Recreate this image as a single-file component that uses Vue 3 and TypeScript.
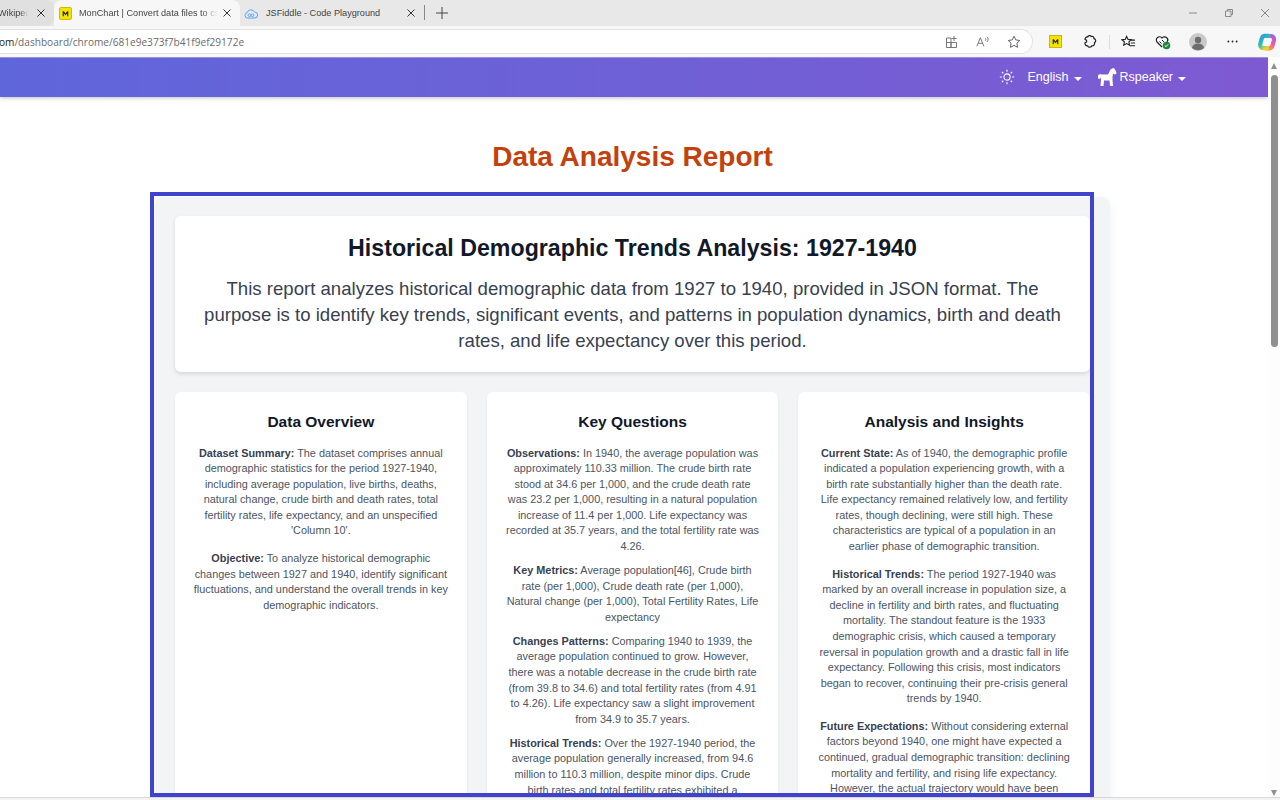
<script setup lang="ts">
interface Para { label: string; text: string }
interface Column { title: string; tight: boolean; paras: Para[] }
const columns: Column[] = [
  { title: 'Data Overview', tight: false, paras: [
    { label: 'Dataset Summary:', text: "The dataset comprises annual demographic statistics for the period 1927-1940, including average population, live births, deaths, natural change, crude birth and death rates, total fertility rates, life expectancy, and an unspecified 'Column 10'." },
    { label: 'Objective:', text: 'To analyze historical demographic changes between 1927 and 1940, identify significant fluctuations, and understand the overall trends in key demographic indicators.' },
  ]},
  { title: 'Key Questions', tight: true, paras: [
    { label: 'Observations:', text: 'In 1940, the average population was approximately 110.33 million. The crude birth rate stood at 34.6 per 1,000, and the crude death rate was 23.2 per 1,000, resulting in a natural population increase of 11.4 per 1,000. Life expectancy was recorded at 35.7 years, and the total fertility rate was 4.26.' },
    { label: 'Key Metrics:', text: 'Average population[46], Crude birth rate (per 1,000), Crude death rate (per 1,000), Natural change (per 1,000), Total Fertility Rates, Life expectancy' },
    { label: 'Changes Patterns:', text: 'Comparing 1940 to 1939, the average population continued to grow. However, there was a notable decrease in the crude birth rate (from 39.8 to 34.6) and total fertility rates (from 4.91 to 4.26). Life expectancy saw a slight improvement from 34.9 to 35.7 years.' },
    { label: 'Historical Trends:', text: 'Over the 1927-1940 period, the average population generally increased, from 94.6 million to 110.3 million, despite minor dips. Crude birth rates and total fertility rates exhibited a downward trend over the period.' },
  ]},
  { title: 'Analysis and Insights', tight: false, paras: [
    { label: 'Current State:', text: 'As of 1940, the demographic profile indicated a population experiencing growth, with a birth rate substantially higher than the death rate. Life expectancy remained relatively low, and fertility rates, though declining, were still high. These characteristics are typical of a population in an earlier phase of demographic transition.' },
    { label: 'Historical Trends:', text: 'The period 1927-1940 was marked by an overall increase in population size, a decline in fertility and birth rates, and fluctuating mortality. The standout feature is the 1933 demographic crisis, which caused a temporary reversal in population growth and a drastic fall in life expectancy. Following this crisis, most indicators began to recover, continuing their pre-crisis general trends by 1940.' },
    { label: 'Future Expectations:', text: 'Without considering external factors beyond 1940, one might have expected a continued, gradual demographic transition: declining mortality and fertility, and rising life expectancy. However, the actual trajectory would have been shaped by later events.' },
  ]},
]
</script>

<template>
  <div class="window">
    <div class="tabstrip">
      <div class="tab side-left">
        <span class="tab-title fade-short">Wikipedia</span>
        <svg class="tab-x" viewBox="0 0 8 8"><path d="M.5.5l7 7M7.500.5l-7 7" stroke="#333"/></svg>
      </div>
      <div class="tab active">
        <svg class="fav" viewBox="0 0 14 14"><rect x="0.5" y="0.5" width="13" height="13" rx="1.5" fill="#f5e300" stroke="#c9b400"/><path d="M4 10V4.5h1.2L7 7l1.800-2.500H10V10H8.800V6.800L7 9 5.200 6.800V10Z" fill="#222"/></svg>
        <span class="tab-title fade">MonChart | Convert data files to csv</span>
        <svg class="tab-x" viewBox="0 0 8 8"><path d="M.5.5l7 7M7.500.5l-7 7" stroke="#333"/></svg>
      </div>
      <div class="tab plain">
        <svg class="fav" viewBox="0 0 16 14"><path d="M4 12.2a3 3 0 0 1-.6-5.9A4.6 4.6 0 0 1 12 5.4a3.4 3.4 0 0 1 .4 6.8Z" fill="#dbeafe" stroke="#5a9fe0" stroke-width="1.1"/><circle cx="6.2" cy="9" r="1.5" fill="none" stroke="#5a9fe0"/><circle cx="9.6" cy="9" r="1.5" fill="none" stroke="#5a9fe0"/></svg>
        <span class="tab-title">JSFiddle - Code Playground</span>
        <svg class="tab-x" viewBox="0 0 8 8"><path d="M.5.5l7 7M7.500.5l-7 7" stroke="#333"/></svg>
      </div>
      <span class="tab-sep"></span>
      <svg class="plus" viewBox="0 0 12 12"><path d="M6 0v12M0 6h12" stroke="#444" stroke-width="1"/></svg>
      <div class="win-controls">
        <svg viewBox="0 0 10 10"><path d="M1 5h8" stroke="#8a8a8a"/></svg>
        <svg viewBox="0 0 10 10"><path d="M1.5 3h5.5v5.5H1.5ZM3.5 3V1.5h5v5H7" fill="none" stroke="#8a8a8a"/></svg>
        <svg viewBox="0 0 10 10"><path d="M1 1l8 8M9 1l-8 8" stroke="#8a8a8a"/></svg>
      </div>
    </div>
    <div class="toolbar">
      <div class="address">
        <span class="url"><span class="url-dark">om</span>/dashboard/chrome/681e9e373f7b41f9ef29172e</span>
        <svg class="addr-ic" viewBox="0 0 14 14"><path d="M1.5 3h4.5v4.5H1.5ZM1.5 7.5h4.5V12.5H1.5ZM6 7.5h5.5V12.5H6ZM9 1v5M6.5 3.500h5" fill="none" stroke="#777"/></svg>
        <svg class="addr-ic" viewBox="0 0 16 14"><path d="M1 12L5 2l4 10M2.500 8.500h5M10.500 2.500c1 .8 1 2 0 3M12.500 1c1.800 1.500 1.800 4.500 0 6" fill="none" stroke="#666"/></svg>
        <svg class="addr-ic" viewBox="0 0 14 14"><path d="M7 1.200l1.800 3.700 4 .6-2.900 2.800.7 4L7 10.400l-3.600 1.900.7-4L1.200 5.500l4-.6Z" fill="none" stroke="#666"/></svg>
      </div>
      <svg class="tool-ic ext-m" viewBox="0 0 14 14"><rect x="0.500" y="0.500" width="13" height="13" fill="#f5e300" stroke="#c9b400"/><path d="M4 10V4.500h1.200L7 7l1.800-2.500H10V10H8.800V6.800L7 9 5.200 6.800V10Z" fill="#222"/></svg>
      <svg class="tool-ic ext-puzzle" viewBox="0 0 16 16"><path d="M5 3.200a2.100 2.100 0 0 1 3.800-.6c1.600-.6 3.100.6 2.900 2.300a2.300 2.300 0 0 1 .6 4.300c.5 2-1 3.800-3.100 3.500a2.300 2.300 0 0 1-4.200 0C3 12.800 1.600 11 2.200 9.400a2.200 2.200 0 0 0 1.800-1.800 2.200 2.200 0 0 0-1.800-1.800C1.800 4.400 3.300 2.800 5 3.200Z" fill="none" stroke="#222" stroke-width="1.300"/></svg>
      <span class="tool-sep"></span>
      <svg class="tool-ic ext-fav" viewBox="0 0 16 14"><path d="M6 1l1.500 3.200 3.500.4-2.600 2.300.7 3.500L6 8.700l-3.100 1.700.7-3.500L1 4.600l3.500-.4Z" fill="none" stroke="#222" stroke-width="1.200"/><path d="M10.500 5H15M10.500 8H15M9.500 11H15" stroke="#222" stroke-width="1.100"/></svg>
      <svg class="tool-ic ext-heart" viewBox="0 0 16 16"><path d="M7 13L2 8a3 3 0 0 1 5-4 3 3 0 0 1 5 4" fill="none" stroke="#222" stroke-width="1.200"/><path d="M4.500 7.500l2 2M7 6l2 2" stroke="#222"/><circle cx="11.500" cy="11.500" r="3.800" fill="#1f8a3b"/><path d="M9.800 11.500l1.200 1.200 2.200-2.400" fill="none" stroke="#fff"/></svg>
      <svg class="avatar" viewBox="0 0 18 18"><circle cx="9" cy="9" r="9" fill="#c9c9c9"/><circle cx="9" cy="7" r="3.200" fill="#6e6e6e"/><path d="M3 15a6 4.500 0 0 1 12 0 9 9 0 0 1-12 0Z" fill="#6e6e6e"/></svg>
      <svg class="dots" viewBox="0 0 12 3"><circle cx="1.500" cy="1.500" r="1" fill="#222"/><circle cx="6" cy="1.500" r="1" fill="#222"/><circle cx="10.500" cy="1.500" r="1" fill="#222"/></svg>
      <svg class="copilot" viewBox="0 0 18 18"><defs><linearGradient id="cpa" x1="0" y1="0" x2="0.600" y2="1"><stop offset="0" stop-color="#1e9bf0"/><stop offset="0.600" stop-color="#35c6a0"/><stop offset="1" stop-color="#e8d13a"/></linearGradient><linearGradient id="cpb" x1="0.800" y1="0" x2="0.300" y2="1"><stop offset="0" stop-color="#a95ce8"/><stop offset="0.500" stop-color="#ee5a9a"/><stop offset="1" stop-color="#f79a3e"/></linearGradient></defs><path d="M8 15.300H11.300C13 15.300 13.800 14.500 14.300 13L15.800 7.700C16.400 5.200 15.200 3 13 3H10" fill="none" stroke="url(#cpb)" stroke-width="4.200" stroke-linecap="round"/><path d="M10.500 2.800H7C5.400 2.800 4.500 3.500 4 5L2.400 10.500C1.800 12.800 3 15.200 5.200 15.200H9" fill="none" stroke="url(#cpa)" stroke-width="4.200" stroke-linecap="round"/></svg>
    </div>
    <div class="viewport">
      <div class="page">
        <nav class="navbar">
          <svg class="sun" viewBox="0 0 16 16"><circle cx="8" cy="8" r="3.100" fill="none" stroke="#fff" stroke-width="1.100"/><path d="M8 .8v2M8 13.200v2M.8 8h2M13.200 8h2M2.900 2.900l1.400 1.400M11.700 11.700l1.400 1.400M2.900 13.100l1.400-1.400M11.700 4.300l1.400-1.400" stroke="#fff" stroke-width="1.100"/></svg>
          <span class="nav-item">English<i class="caret"></i></span>
          <span class="nav-item user">
            <svg class="pet" viewBox="0 0 20 18"><path d="M1 8C1 6 3 6 5 6.500L11 6.500C12 5 12.500 3 13.500 1.500L15 .5 17 0 17.500 1C18.500 2 19.500 4 19.500 5.500L18 6.500 16 5.800 15.500 9 15.500 12 16 18H13L12.500 12.500H7L6.500 18H3.500L4 11.500C3.500 10.500 3.500 9.500 3.500 9L2.500 11 1 10.500Z" fill="#fff"/></svg>
            Rspeaker<i class="caret"></i>
          </span>
        </nav>
        <main class="main">
          <h1 class="report-title">Data Analysis Report</h1>
          <div class="container">
            <section class="hero">
              <h2>Historical Demographic Trends Analysis: 1927-1940</h2>
              <p>This report analyzes historical demographic data from 1927 to 1940, provided in JSON format. The purpose is to identify key trends, significant events, and patterns in population dynamics, birth and death rates, and life expectancy over this period.</p>
            </section>
            <div class="grid">
              <article v-for="c in columns" :key="c.title" class="card" :class="{ tight: c.tight }">
                <h3>{{ c.title }}</h3>
                <p v-for="p in c.paras" :key="p.label"><strong>{{ p.label }}</strong> {{ p.text }}</p>
              </article>
            </div>
          </div>
        </main>
        <div class="frame"></div>
      </div>
      <div class="scrollbar">
        <i class="arrow up"></i>
        <div class="thumb"></div>
        <i class="arrow down"></i>
      </div>
    </div>
    <div class="bottom"></div>
  </div>
</template>

<style scoped>
.window { width: 1280px; height: 800px; display: flex; flex-direction: column; overflow: hidden; font-family: "Liberation Sans", Arial, sans-serif; background: #fff; }
.tabstrip { height: 26px; flex: none; background: #e8e8e8; display: flex; align-items: flex-end; position: relative; }
.tab { height: 26px; display: flex; align-items: center; font-family: "Liberation Sans", Arial, sans-serif; font-size: 9.15px; color: #444; box-sizing: border-box; }
.side-left { width: 54px; background: #e0e0e0; border-radius: 0 8px 8px 0; height: 26px; }
.active { width: 186px; background: #f7f7f7; border-radius: 8px 8px 0 0; padding-left: 5px; }
.plain { width: 184px; padding-left: 4px; }
.fav { width: 13px; height: 13px; flex: none; margin-right: 7px; }
.plain .fav { width: 14px; margin-right: 8px; }
.tab-title { flex: 1; white-space: nowrap; overflow: hidden; min-width: 0; }
.fade { -webkit-mask-image: linear-gradient(90deg, #000 88%, transparent 100%); mask-image: linear-gradient(90deg, #000 88%, transparent 100%); }
.fade-short { margin-left: -2px; -webkit-mask-image: linear-gradient(90deg, #000 75%, transparent 100%); mask-image: linear-gradient(90deg, #000 75%, transparent 100%); }
.tab-x { width: 8px; height: 8px; flex: none; margin: 0 9px 0 9px; }
.active .tab-x { margin-left: 5px; }
.tab-sep { width: 1px; height: 15px; background: #888; margin: 0 0 6px 0; }
.plus { width: 12px; height: 12px; margin: 0 0 7px 11px; }
.win-controls { margin-left: auto; height: 26px; display: flex; align-items: center; gap: 26px; padding-right: 10px; }
.win-controls svg { width: 10px; height: 10px; }
.toolbar { height: 31px; flex: none; background: #f7f7f7; display: flex; align-items: center; position: relative; box-sizing: border-box; }
.address { width: 1034px; height: 25px; margin-left: -1px; background: #fff; border: 1px solid #e2e2e2; border-left: none; border-radius: 0 13px 13px 0; display: flex; align-items: center; box-sizing: border-box; padding-right: 11px; gap: 17px; flex: none; }
.url { flex: 1; font-family: "Open Sans", "Liberation Sans", sans-serif; font-size: 10.1px; color: #6b6b6b; white-space: nowrap; }
.url-dark { color: #222; }
.addr-ic { width: 14px; height: 14px; flex: none; }
.tool-ic { flex: none; width: 14px; height: 14px; }
.ext-m { margin-left: 16px; width: 13px; height: 13px; }
.ext-puzzle { margin-left: 21px; width: 15px; height: 15px; }
.tool-sep { width: 1px; height: 14px; background: #ddd; margin-left: 11px; }
.ext-fav { margin-left: 11px; width: 15px; height: 14px; }
.ext-heart { margin-left: 19px; width: 16px; height: 16px; }
.avatar { width: 18px; height: 18px; margin-left: 18px; flex: none; }
.dots { width: 11px; height: 3px; margin-left: 20px; flex: none; }
.copilot { width: 18px; height: 18px; margin-left: 20px; flex: none; }
.viewport { height: 740px; flex: none; display: flex; }
.page { width: 1268px; flex: none; position: relative; overflow: hidden; background: #fff; }
.navbar { height: 40px; box-sizing: border-box; background: linear-gradient(90deg, #5f66da 0%, #7e5ad2 100%); border-top: 1px solid #9a8ee0; box-shadow: 0 1px 4px rgba(0,0,0,.25); display: flex; align-items: center; justify-content: flex-end; padding-right: 82px; color: #fff; font-size: 12.5px; padding-bottom: 2px; }
.sun { width: 16px; height: 16px; margin-right: 13px; }
.nav-item { display: flex; align-items: center; }
.user { margin-left: 15px; }
.caret { width: 0; height: 0; border-left: 4px solid transparent; border-right: 4px solid transparent; border-top: 4px solid #fff; margin-left: 5px; margin-top: 5px; }
.pet { width: 20px; height: 18px; margin-right: 3px; }
.main { margin-left: 155px; width: 955px; }
.report-title { margin: 0; padding-top: 42px; height: 100px; box-sizing: border-box; text-align: center; font-size: 28px; line-height: 36px; font-weight: 700; color: #c2410c; }
.container { background: #f3f4f6; border-radius: 8px; padding: 19px 20px 20px; box-shadow: 0 4px 12px rgba(0,0,0,.06); }
.hero { background: #fff; border-radius: 6px; padding: 16px 20px 18px; text-align: center; box-shadow: 0 2px 4px rgba(0,0,0,.12); margin-bottom: 20px; }
.hero h2 { margin: 0 0 12px; font-size: 23.2px; line-height: 32px; font-weight: 700; color: #111827; }
.hero p { margin: 0; font-size: 18.6px; line-height: 26px; color: #374151; }
.grid { display: grid; grid-template-columns: repeat(3, 1fr); gap: 20px; }
.card { background: #fff; border-radius: 6px; padding: 20px 18px; text-align: center; box-shadow: 0 1px 3px rgba(0,0,0,.06); min-width: 0; }
.card h3 { margin: 0 0 13.500px; font-size: 15.5px; line-height: 20px; font-weight: 700; color: #111827; }
.card p { margin: 0 0 11.900px; font-size: 10.87px; line-height: 15.600px; color: #4b5563; }
.card.tight p { margin-bottom: 8.400px; }
.card strong { color: #374151; }
.frame { position: absolute; left: 150px; top: 135px; width: 944px; height: 605px; box-sizing: border-box; border: 4px solid #4044cc; pointer-events: none; }
.scrollbar { width: 12px; flex: none; background: #fdfdfd; display: flex; flex-direction: column; align-items: center; position: relative; }
.thumb { width: 7px; height: 272px; margin-top: 6px; background: #8f8f8f; border-radius: 4px; }
.arrow { width: 0; height: 0; border-left: 3.500px solid transparent; border-right: 3.500px solid transparent; }
.arrow.up { border-bottom: 6px solid #8f8f8f; margin-top: 6px; }
.arrow.down { border-top: 6px solid #8f8f8f; margin-top: auto; margin-bottom: 1px; }
.bottom { height: 3px; flex: none; background: #f3f3f3; border-top: 1px solid #d8d8d8; box-sizing: border-box; }
</style>
